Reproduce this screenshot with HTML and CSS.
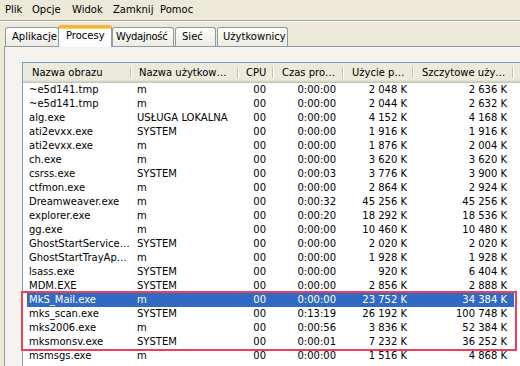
FILE: index.html
```html
<!DOCTYPE html>
<html lang="pl">
<head>
<meta charset="utf-8">
<title>Menedżer zadań</title>
<link rel="stylesheet" href="styles.css">
</head>
<body>
<div class="menubar">
  <span class="menu-item m-plik">Plik</span>
  <span class="menu-item m-opcje">Opcje</span>
  <span class="menu-item m-widok">Widok</span>
  <span class="menu-item m-zamknij">Zamknij</span>
  <span class="menu-item m-pomoc">Pomoc</span>
</div>
<div class="menu-sep"></div>
<div class="tabstrip">
  <div class="tab tab-apps">Aplikacje</div>
  <div class="tab tab-proc active">Procesy</div>
  <div class="tab tab-perf">Wydajność</div>
  <div class="tab tab-net">Sieć</div>
  <div class="tab tab-users">Użytkownicy</div>
</div>
<div class="panel">
  <div class="list">
    <div class="header">
      <div class="hcell">Nazwa obrazu</div>
      <div class="hcell">Nazwa użytkow…</div>
      <div class="hcell">CPU</div>
      <div class="hcell">Czas pro…</div>
      <div class="hcell">Użycie p…</div>
      <div class="hcell">Szczytowe uży…</div>
      <div class="hfill"></div>
    </div>
    <div class="rows">
      <div class="row"><span class="c">~e5d141.tmp</span><span class="c">m</span><span class="c r">00</span><span class="c r">0:00:00</span><span class="c r">2 048 K</span><span class="c r">2 636 K</span></div>
      <div class="row"><span class="c">~e5d141.tmp</span><span class="c">m</span><span class="c r">00</span><span class="c r">0:00:00</span><span class="c r">2 044 K</span><span class="c r">2 632 K</span></div>
      <div class="row"><span class="c">alg.exe</span><span class="c">USŁUGA LOKALNA</span><span class="c r">00</span><span class="c r">0:00:00</span><span class="c r">4 152 K</span><span class="c r">4 168 K</span></div>
      <div class="row"><span class="c">ati2evxx.exe</span><span class="c">SYSTEM</span><span class="c r">00</span><span class="c r">0:00:00</span><span class="c r">1 916 K</span><span class="c r">1 916 K</span></div>
      <div class="row"><span class="c">ati2evxx.exe</span><span class="c">m</span><span class="c r">00</span><span class="c r">0:00:00</span><span class="c r">1 876 K</span><span class="c r">2 004 K</span></div>
      <div class="row"><span class="c">ch.exe</span><span class="c">m</span><span class="c r">00</span><span class="c r">0:00:00</span><span class="c r">3 620 K</span><span class="c r">3 620 K</span></div>
      <div class="row"><span class="c">csrss.exe</span><span class="c">SYSTEM</span><span class="c r">00</span><span class="c r">0:00:03</span><span class="c r">3 776 K</span><span class="c r">3 900 K</span></div>
      <div class="row"><span class="c">ctfmon.exe</span><span class="c">m</span><span class="c r">00</span><span class="c r">0:00:00</span><span class="c r">2 864 K</span><span class="c r">2 924 K</span></div>
      <div class="row"><span class="c">Dreamweaver.exe</span><span class="c">m</span><span class="c r">00</span><span class="c r">0:00:32</span><span class="c r">45 256 K</span><span class="c r">45 256 K</span></div>
      <div class="row"><span class="c">explorer.exe</span><span class="c">m</span><span class="c r">00</span><span class="c r">0:00:20</span><span class="c r">18 292 K</span><span class="c r">18 536 K</span></div>
      <div class="row"><span class="c">gg.exe</span><span class="c">m</span><span class="c r">00</span><span class="c r">0:00:00</span><span class="c r">10 460 K</span><span class="c r">10 480 K</span></div>
      <div class="row"><span class="c">GhostStartService…</span><span class="c">SYSTEM</span><span class="c r">00</span><span class="c r">0:00:00</span><span class="c r">2 020 K</span><span class="c r">2 020 K</span></div>
      <div class="row"><span class="c">GhostStartTrayAp…</span><span class="c">m</span><span class="c r">00</span><span class="c r">0:00:00</span><span class="c r">1 928 K</span><span class="c r">1 928 K</span></div>
      <div class="row"><span class="c">lsass.exe</span><span class="c">SYSTEM</span><span class="c r">00</span><span class="c r">0:00:00</span><span class="c r">920 K</span><span class="c r">6 404 K</span></div>
      <div class="row"><span class="c">MDM.EXE</span><span class="c">SYSTEM</span><span class="c r">00</span><span class="c r">0:00:00</span><span class="c r">2 856 K</span><span class="c r">2 888 K</span></div>
      <div class="row selected"><span class="c">MkS_Mail.exe</span><span class="c">m</span><span class="c r">00</span><span class="c r">0:00:00</span><span class="c r">23 752 K</span><span class="c r">34 384 K</span></div>
      <div class="row"><span class="c">mks_scan.exe</span><span class="c">SYSTEM</span><span class="c r">00</span><span class="c r">0:13:19</span><span class="c r">26 192 K</span><span class="c r">100 748 K</span></div>
      <div class="row"><span class="c">mks2006.exe</span><span class="c">m</span><span class="c r">00</span><span class="c r">0:00:56</span><span class="c r">3 836 K</span><span class="c r">52 384 K</span></div>
      <div class="row"><span class="c">mksmonsv.exe</span><span class="c">SYSTEM</span><span class="c r">00</span><span class="c r">0:00:01</span><span class="c r">7 232 K</span><span class="c r">36 252 K</span></div>
      <div class="row"><span class="c">msmsgs.exe</span><span class="c">m</span><span class="c r">00</span><span class="c r">0:00:00</span><span class="c r">1 516 K</span><span class="c r">4 868 K</span></div>
    </div>
  </div>
</div>
<div class="highlight-box"></div>
</body>
</html>
```
FILE: styles.css
```css
html, body {
  margin: 0;
  padding: 0;
  width: 520px;
  height: 366px;
  overflow: hidden;
  background: #ece9d8;
  font-family: "DejaVu Sans", "Liberation Sans", sans-serif;
  font-size: 10px;
  color: #000;
}

.menubar {
  height: 20px;
  display: flex;
  align-items: center;
  padding-left: 5px;
  line-height: 20px;
}

.menu-item { white-space: nowrap; }
.m-plik { width: 27px; }
.m-opcje { width: 40px; }
.m-widok { width: 41px; }
.m-zamknij { width: 47px; }

.menu-sep {
  height: 1px;
  background: #aca899;
  border-bottom: 1px solid #ffffff;
}

.tabstrip {
  height: 24px;
  display: flex;
  align-items: flex-end;
  padding-left: 5px;
  position: relative;
  z-index: 2;
}

.tab {
  box-sizing: border-box;
  height: 19px;
  border: 1px solid #919b9c;
  border-bottom: none;
  border-radius: 3px 3px 0 0;
  background: linear-gradient(#ffffff, #f3f2ec 60%, #ecebe5);
  padding-left: 6px;
  line-height: 18px;
  white-space: nowrap;
}

.tab-apps { width: 54px; padding-left: 6px; }
.tab-proc { width: 54px; margin-left: -1px; }
.tab-perf { width: 62px; padding-left: 3px; letter-spacing: -0.3px; }
.tab-net { width: 41px; margin-left: 1px; padding-left: 6px; }
.tab-users { width: 71px; margin-left: 1px; padding-left: 5px; }

.tab.active {
  height: 22px;
  margin-bottom: -1px;
  background: #fcfcfe;
  border-top: 3px solid #f5b53a;
  box-shadow: inset 0 1px 0 #ffd35a;
  padding-left: 7px;
  line-height: 15px;
}

.panel {
  margin-left: 4px;
  border-top: 1px solid #919b9c;
  border-left: 1px solid #919b9c;
  background: #f4f3ee;
  padding: 15px 0 0 17px;
  height: 400px;
}

.list {
  border: 1px solid #7f9db9;
  background: #ffffff;
  width: 560px;
  height: 400px;
}

.header {
  display: grid;
  grid-template-columns: 109px 107px 35px 70px 70px 100px 1fr;
  height: 20px;
  background: #ebeadb;
  box-shadow: inset 0 -1px 0 #cbc7b8, inset 0 -2px 0 #d6d2c2, inset 0 -3px 0 #e2e2da;
}

.hcell {
  position: relative;
  line-height: 19px;
  padding-left: 8px;
  white-space: nowrap;
  overflow: hidden;
}

.hcell:first-child { padding-left: 9px; }
.hcell:nth-child(2), .hcell:nth-child(3) { padding-left: 7px; }

.hcell::after {
  content: "";
  position: absolute;
  right: 0;
  top: 4px;
  bottom: 5px;
  width: 2px;
  background: linear-gradient(to right, #c7c5b2 50%, #ffffff 50%);
}

.rows {
  display: flex;
  flex-direction: column;
}

.row {
  display: grid;
  grid-template-columns: 109px 107px 35px 70px 70px 100px;
  width: 491px;
  height: 14px;
  line-height: 14px;
  white-space: nowrap;
}

.c {
  padding-left: 6px;
  overflow: hidden;
}

.c:nth-child(2) { padding-left: 5px; }

.c.r {
  padding-left: 0;
  padding-right: 7px;
  text-align: right;
}

.c.r:nth-child(3), .c.r:nth-child(4) { padding-right: 8px; }

.row.selected {
  background: linear-gradient(to right, transparent 4px, #316ac5 4px);
  color: #ffffff;
}

.highlight-box {
  position: absolute;
  left: 21px;
  top: 291px;
  width: 492px;
  height: 56px;
  border: 2px solid #ef3d5a;
}
```
